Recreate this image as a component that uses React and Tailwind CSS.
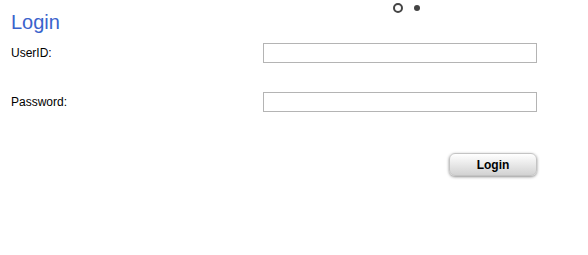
export default function App() {
  return (
    <div className="w-[588px] h-[255px] bg-white font-['Liberation_Sans',Arial,sans-serif] text-black relative">
      {/* pager dots */}
      <div className="absolute top-[3px] left-[393px] flex items-center gap-[11px]">
        <span className="w-[10px] h-[10px] rounded-full border-[2px] border-[#444] bg-white" />
        <span className="w-[6px] h-[6px] rounded-full bg-[#444]" />
      </div>

      <div className="pl-[11px] pt-[10px] pr-[51px]">
        <h1 className="text-[20px] leading-[24px] text-[#3a63cc]">Login</h1>

        <div className="mt-[9px] flex items-center justify-between h-[20px]">
          <label className="text-[12px]">UserID:</label>
          <input className="w-[274px] h-[20px] border border-[#b4b4b4] outline-none" />
        </div>

        <div className="mt-[29px] flex items-center justify-between h-[20px]">
          <label className="text-[12px]">Password:</label>
          <input type="password" className="w-[274px] h-[20px] border border-[#b4b4b4] outline-none" />
        </div>

        <div className="mt-[41px] flex justify-end">
          <button className="w-[88px] h-[23px] rounded-[6px] border border-[#c4c4c4] bg-gradient-to-b from-white to-[#d2d2d2] shadow-[0_1px_3px_rgba(0,0,0,0.45)] text-[12px] font-bold">
            Login
          </button>
        </div>
      </div>
    </div>
  )
}
